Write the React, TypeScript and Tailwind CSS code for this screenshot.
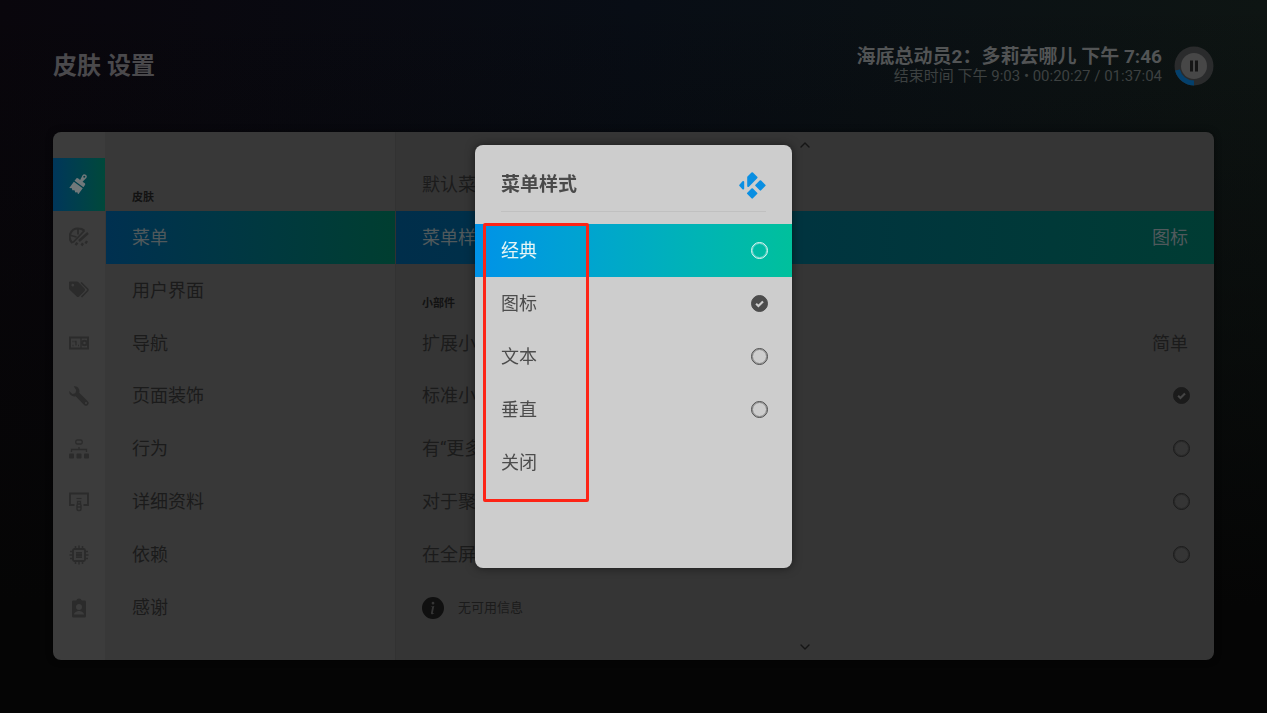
import { useState } from "react";
import { BsInfoCircleFill } from "react-icons/bs";
import { ChevronDown, ChevronUp } from "lucide-react";

function BrushIcon() {
  return (
    <svg viewBox="0 0 20 20" className="size-5" fill="currentColor">
      <g transform="rotate(36 10 10)">
        <path
          fillRule="evenodd"
          d="M10-1.500a2.300 2.300 0 0 1 2.300 2.300L11.500 6h2.300A1.700 1.700 0 0 1 15.500 7.700V10h-11V7.700A1.700 1.700 0 0 1 6.200 6h2.300L7.700.8A2.300 2.300 0 0 1 10-1.500zM10 0a1 1 0 1 0 0 2 1 1 0 0 0 0-2z"
        />
        <path d="M4.500 11.200h11V19l-2-1.300-1.500 1.300-2-1.300L8.300 19l-1.500-1.300L4.500 19z" />
      </g>
    </svg>
  );
}

function PaletteIcon() {
  return (
    <svg viewBox="0 0 20 20" className="size-5" fill="none" stroke="currentColor">
      <path d="M3.500 16A8.300 8.300 0 0 1 9.500 1.500c2.300 0 4.200.8 5.800 2.200" strokeWidth="2.200" />
      <path d="M9 2v5.500M2 8.500l5.500 1.500M4 15.500L15.500 3.500" strokeWidth="1.800" />
      <path d="M6.500 18l2-2.200M10 14L19 6M12.500 18.500l1.500-2.200M16.500 16.500l1.500-2.500" strokeWidth="2.400" />
    </svg>
  );
}

function TagsIcon() {
  return (
    <svg viewBox="0 0 20 20" className="size-5" fill="currentColor">
      <path
        fillRule="evenodd"
        d="M1 1.500h7c.5 0 1 .2 1.300.5l6.200 6.500c.7.7.7 1.700 0 2.400l-5.400 5.600c-.7.7-1.800.7-2.400 0L.9 10C.4 9.600 0 9 0 8.500V2.500c0-.6.400-1 1-1zM3.800 3.800a1.400 1.400 0 1 0 0 2.800 1.400 1.400 0 0 0 0-2.800z"
      />
      <path
        d="M12 2.500l6.600 6.500c.5.500.5 1.200 0 1.700L12.500 17"
        fill="none"
        stroke="currentColor"
        strokeWidth="1.600"
      />
    </svg>
  );
}

function TicketIcon() {
  return (
    <svg viewBox="0 0 20 20" className="size-5" fill="none" stroke="currentColor">
      <rect x="1" y="4.500" width="18" height="11" strokeWidth="2" />
      <path d="M12 5v10" strokeWidth="1.400" />
      <path d="M5.500 8.500h1.500v4M3.500 12.500h1M9 12.500h1M3.500 8.500h1" strokeWidth="1.300" />
      <circle cx="15.500" cy="10" r="2.300" strokeWidth="2" />
    </svg>
  );
}

function WrenchIcon() {
  return (
    <svg viewBox="0 0 20 20" className="size-5" fill="currentColor">
      <path
        fillRule="evenodd"
        d="M4.800.3a5 5 0 0 1 5.400 6.500l8.600 8.400a2.600 2.600 0 0 1-3.700 3.700L6.700 10.200A5 5 0 0 1 .2 5l3.200 3 3-.8.800-3zM17 16a1.100 1.100 0 1 0 0 2.200A1.100 1.100 0 0 0 17 16z"
      />
    </svg>
  );
}

function SitemapIcon() {
  return (
    <svg viewBox="0 0 20 20" className="size-5" fill="none" stroke="currentColor">
      <rect x="6.800" y="1" width="6.400" height="4" rx="1.500" strokeWidth="1.300" />
      <path d="M10 8v2.500M2.500 13v-2.500h15V13" strokeWidth="1.300" />
      <g fill="currentColor" stroke="none">
        <rect x="0" y="14.500" width="5" height="5" rx="1" />
        <rect x="7.500" y="14.500" width="5" height="5" rx="1" />
        <rect x="15" y="14.500" width="5" height="5" rx="1" />
      </g>
    </svg>
  );
}

function ScreenLockIcon() {
  return (
    <svg viewBox="0 0 20 20" className="size-5" fill="none" stroke="currentColor">
      <path d="M5.500 13H1V1.500h18V13h-4.500" strokeWidth="1.800" />
      <path d="M7.500 6.500h5" strokeWidth="1.200" />
      <rect x="8" y="12" width="4" height="6.500" rx="1.500" strokeWidth="1.500" />
      <path d="M8.500 12V9.500h3V12M8 15h4" strokeWidth="1.300" />
    </svg>
  );
}

function ChipIcon() {
  return (
    <svg viewBox="0 0 20 20" className="size-5" fill="none" stroke="currentColor">
      <rect x="4" y="4" width="12" height="12" rx="1.500" strokeWidth="1.800" />
      <path d="M7 7.800h6M7 10h6M7 12.200h6" strokeWidth="1.800" />
      <path
        d="M6.500 4V1M10 4V.5M13.500 4V1M6.500 19v-3M10 19.500V16M13.500 19v-3M4 6.500H1M4 10H.5M4 13.500H1M19 6.500h-3M19.500 10H16M19 13.500h-3"
        strokeWidth="1.500"
      />
    </svg>
  );
}

function BadgeIcon() {
  return (
    <svg viewBox="0 0 20 20" className="size-5" fill="currentColor">
      <path
        fillRule="evenodd"
        d="M4.500 2.500h2.700a3 3 0 0 1 5.600 0h2.700c.9 0 1.500.6 1.500 1.500v14c0 .9-.6 1.500-1.500 1.500h-11c-.9 0-1.500-.6-1.500-1.500V4c0-.9.600-1.500 1.500-1.500zM10 6a3 3 0 1 0 0 6 3 3 0 0 0 0-6zm-5 10.500h10c0-2.300-3-3.500-5-3.500s-5 1.200-5 3.500z"
      />
    </svg>
  );
}

function KodiLogo() {
  return (
    <svg
      viewBox="0 0 27 27"
      className="size-[27px]"
      fill="#0a8fe2"
      stroke="#0a8fe2"
      strokeWidth="2"
      strokeLinejoin="round"
    >
      <path d="M13.200 1.200l4.300 4.300L9.200 14V5.300z" />
      <path d="M1.200 13.300L4.200 10v6.600z" />
      <path d="M21.400 9.200l4.200 4.200-4.200 4.200-4.200-4.200z" />
      <path d="M13.200 17.200l4.200 4.200-4.200 4.200L9 21.400z" />
    </svg>
  );
}

const sections = [
  { label: "外观", icon: <BrushIcon /> },
  { label: "配色", icon: <PaletteIcon /> },
  { label: "标签", icon: <TagsIcon /> },
  { label: "标志", icon: <TicketIcon /> },
  { label: "工具", icon: <WrenchIcon /> },
  { label: "结构", icon: <SitemapIcon /> },
  { label: "屏幕", icon: <ScreenLockIcon /> },
  { label: "硬件", icon: <ChipIcon /> },
  { label: "用户", icon: <BadgeIcon /> },
];

const categories = [
  "菜单",
  "用户界面",
  "导航",
  "页面装饰",
  "行为",
  "详细资料",
  "依赖",
  "感谢",
];

const toggles = [
  { label: "标准小", on: true },
  { label: "有“更多", on: false },
  { label: "对于聚", on: false },
  { label: "在全屏", on: false },
];

const menuStyles = ["经典", "图标", "文本", "垂直"];

type ToggleProps = {
  type: "checkbox" | "radio";
  name?: string;
  checked: boolean;
  onChange: () => void;
  tickClass: string;
};

function Toggle({ type, name, checked, onChange, tickClass }: ToggleProps) {
  return (
    <span className="grid place-items-center">
      <input
        type={type}
        name={name}
        checked={checked}
        onChange={onChange}
        className="col-start-1 row-start-1 size-[17px] appearance-none rounded-full border border-current outline outline-1 -outline-offset-2 outline-current/50 checked:bg-current"
      />
      {checked && (
        <svg
          viewBox="0 0 16 16"
          className={`pointer-events-none col-start-1 row-start-1 size-[17px] ${tickClass}`}
          fill="none"
          stroke="currentColor"
          strokeWidth="2"
        >
          <path d="M4.800 8.300l2.200 2.100 4.300-4.300" />
        </svg>
      )}
    </span>
  );
}

function PlayerStatus() {
  return (
    <div className="flex items-center gap-3">
      <div className="text-right">
        <p className="text-[19px] leading-5 font-bold text-[#525455]">
          海底总动员2：多莉去哪儿 下午 7:46
        </p>
        <p className="text-[15px] leading-[18px] text-[#3d4141]">
          结束时间 下午 9:03 • 00:20:27 / 01:37:04
        </p>
      </div>
      <button type="button" aria-label="暂停">
        <svg viewBox="0 0 40 40" className="size-10">
          <circle cx="20" cy="20" r="19.500" fill="#2a2b2c" />
          <path
            d="M20 37A17 17 0 0 1 3.500 24"
            fill="none"
            stroke="#04406c"
            strokeWidth="5"
          />
          <circle cx="20" cy="20" r="13" fill="#474747" />
          <path d="M17.500 14.500v11M22.500 14.500v11" stroke="#151515" strokeWidth="3" />
        </svg>
      </button>
    </div>
  );
}

function SettingsList() {
  const [values, setValues] = useState(toggles.map((t) => t.on));

  return (
    <section className="flex min-w-0 flex-1 flex-col bg-[#353535]">
      <div className="flex h-[26px] items-center justify-center">
        <ChevronUp className="size-4 text-[#151515]" />
      </div>
      <div className="grid flex-1 grid-rows-9">
        <button type="button" className="flex items-center px-[26px]">
          默认菜
        </button>
        <button
          type="button"
          className="flex items-center justify-between bg-linear-to-r from-[#002e4b] via-[#00343f] to-[#003c33] px-[26px] text-[#50595c]"
        >
          <span>菜单样</span>
          <span>图标</span>
        </button>
        <h2 className="flex items-end px-[26px] pb-1 text-[11px] font-bold text-[#121212]">
          小部件
        </h2>
        <button type="button" className="flex items-center justify-between px-[26px]">
          <span>扩展小</span>
          <span>简单</span>
        </button>
        {toggles.map((t, i) => (
          <label key={t.label} className="flex items-center justify-between pr-6 pl-[26px]">
            {t.label}
            <Toggle
              type="checkbox"
              checked={values[i]}
              onChange={() => setValues(values.map((v, j) => (j === i ? !v : v)))}
              tickClass="text-[#454545]"
            />
          </label>
        ))}
        <p className="flex items-center gap-[14px] px-[26px] text-[13px]">
          <BsInfoCircleFill className="size-[22px] text-[#101010]" />
          无可用信息
        </p>
      </div>
      <div className="flex h-[26px] items-center justify-center">
        <ChevronDown className="size-4 text-[#151515]" />
      </div>
    </section>
  );
}

function MenuStyleDialog() {
  const [selected, setSelected] = useState("图标");

  return (
    <div className="fixed inset-0 flex items-center justify-center">
      <div
        role="dialog"
        aria-labelledby="dialog-title"
        className="relative w-[317px] rounded-lg bg-[#cdcdcd] pb-[79px] text-[#4c4c4c] shadow-[0_0_10px_rgba(0,0,0,0.5)]"
      >
        <div className="px-[26px] pt-[14px] pb-3">
          <div className="flex h-[53px] items-center justify-between border-b border-[#c0c0c0]">
            <h2 id="dialog-title" className="text-[19px] font-bold text-[#4a4a4a]">
              菜单样式
            </h2>
            <KodiLogo />
          </div>
        </div>
        {menuStyles.map((style) => (
          <label
            key={style}
            className="flex h-[53px] items-center justify-between pr-6 pl-[26px] first-of-type:bg-linear-to-r first-of-type:from-[#0092e8] first-of-type:to-[#00c09c] first-of-type:text-[#e6f6f6]"
          >
            {style}
            <Toggle
              type="radio"
              name="menu-style"
              checked={selected === style}
              onChange={() => setSelected(style)}
              tickClass="text-[#cdcdcd]"
            />
          </label>
        ))}
        <button type="button" className="flex h-[53px] w-full items-center px-[26px]">
          关闭
        </button>
        <div className="pointer-events-none absolute top-[78px] left-2 h-[279px] w-[106px] rounded-xs border-3 border-[#fd2416]" />
      </div>
    </div>
  );
}

export default function App() {
  return (
    <div className="bg-linear-to-r from-[#09060c] via-[#080d15] to-[#0e1513] font-[Roboto,'Noto_Sans_CJK_SC',sans-serif] text-[18px] text-[#1b1b1b]">
      <div className="flex min-h-screen flex-col bg-linear-to-b from-transparent to-[#050505] to-85% px-[53px] pb-[53px]">
        <header className="flex h-[132px] items-center justify-between">
          <h1 className="text-[24px] font-bold text-[#4a494c]">皮肤 设置</h1>
          <PlayerStatus />
        </header>

        <main className="flex flex-1 overflow-hidden rounded-lg shadow-[0_0_6px_rgba(0,0,0,0.5)]">
          <nav className="grid w-[53px] grid-rows-9 border-r border-[#383838] bg-[#3c3c3c] py-[26px] text-[#2b2b2b]">
            {sections.map((s) => (
              <button
                key={s.label}
                type="button"
                aria-label={s.label}
                className="flex items-center justify-center first:bg-linear-to-r first:from-[#00365a] first:to-[#00483a] first:text-[#70787a]"
              >
                {s.icon}
              </button>
            ))}
          </nav>

          <nav className="grid w-[290px] grid-rows-9 border-r border-[#323232] bg-[#383838] py-[26px]">
            <h2 className="flex items-end px-[26px] pb-1 text-[11px] font-bold text-[#121212]">
              皮肤
            </h2>
            {categories.map((c) => (
              <button
                key={c}
                type="button"
                className="flex items-center px-[26px] first-of-type:bg-linear-to-r first-of-type:from-[#003050] first-of-type:to-[#003e30] first-of-type:text-[#50595c]"
              >
                {c}
              </button>
            ))}
          </nav>

          <SettingsList />
        </main>
      </div>

      <MenuStyleDialog />
    </div>
  );
}
